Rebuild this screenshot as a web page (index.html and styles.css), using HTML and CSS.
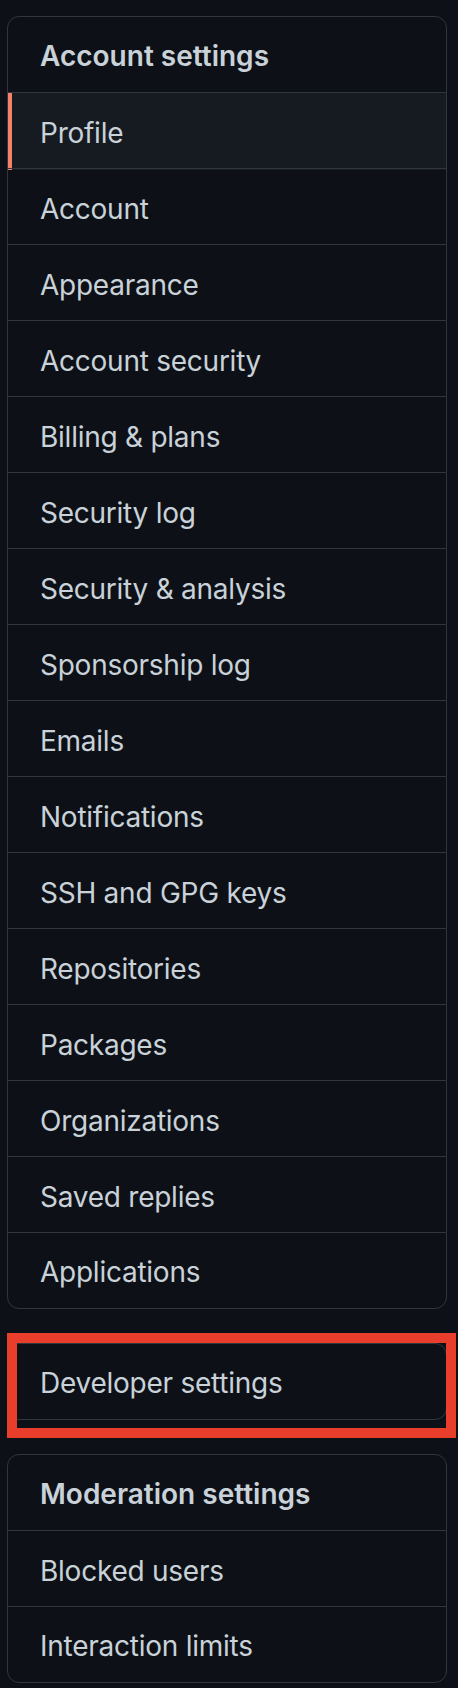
FILE: index.html
```html
<!DOCTYPE html>
<html>
  <head>
    <title>Settings menu</title>
    <link rel="stylesheet" href="styles.css">
  </head>
  <body>
    <nav class="sidebar">
      <div class="menu">
        <div class="menu-heading">Account settings</div>
        <a class="menu-item selected" href="#">Profile</a>
        <a class="menu-item" href="#">Account</a>
        <a class="menu-item" href="#">Appearance</a>
        <a class="menu-item" href="#">Account security</a>
        <a class="menu-item" href="#">Billing &amp; plans</a>
        <a class="menu-item" href="#">Security log</a>
        <a class="menu-item" href="#">Security &amp; analysis</a>
        <a class="menu-item" href="#">Sponsorship log</a>
        <a class="menu-item" href="#">Emails</a>
        <a class="menu-item" href="#">Notifications</a>
        <a class="menu-item" href="#">SSH and GPG keys</a>
        <a class="menu-item" href="#">Repositories</a>
        <a class="menu-item" href="#">Packages</a>
        <a class="menu-item" href="#">Organizations</a>
        <a class="menu-item" href="#">Saved replies</a>
        <a class="menu-item" href="#">Applications</a>
      </div>

      <div class="menu highlighted">
        <a class="menu-item first" href="#">Developer settings</a>
      </div>

      <div class="menu">
        <div class="menu-heading">Moderation settings</div>
        <a class="menu-item" href="#">Blocked users</a>
        <a class="menu-item" href="#">Interaction limits</a>
      </div>
    </nav>
  </body>
</html>
```

FILE: styles.css
```css
body {
  margin: 0;
  background: #0d1117;
  font-family: Inter, "Noto Sans", sans-serif;
  color: #c9d1d9;
}

.sidebar {
  width: 440px;
  margin: 16px 0 0 7px;
  display: flex;
  flex-direction: column;
  gap: 34px;
}

.menu {
  border: 1px solid #30363d;
  border-radius: 12px;
  overflow: hidden;
}

.menu-heading {
  height: 75px;
  box-sizing: border-box;
  display: flex;
  align-items: center;
  padding: 2px 32px 0;
  font-size: 28px;
  font-weight: 600;
}

.menu-item {
  display: flex;
  align-items: center;
  height: 75px;
  box-sizing: content-box;
  padding: 2px 32px 0;
  margin-bottom: -2px;
  border-top: 1px solid #30363d;
  color: #c9d1d9;
  text-decoration: none;
  font-size: 28px;
  letter-spacing: -0.25px;
}

.menu-item:last-child {
  margin-bottom: 0;
  height: 73px;
}

.menu-item.first {
  border-top: none;
}

.menu-item.selected {
  background: #161b22;
  box-shadow: inset 4px 0 0 #f78166;
}

.highlighted {
  position: relative;
  overflow: visible;
}

.highlighted::after {
  content: "";
  position: absolute;
  top: -11px;
  left: -1px;
  width: 429px;
  height: 85px;
  border: 10px solid #e93e2b;
}
```
